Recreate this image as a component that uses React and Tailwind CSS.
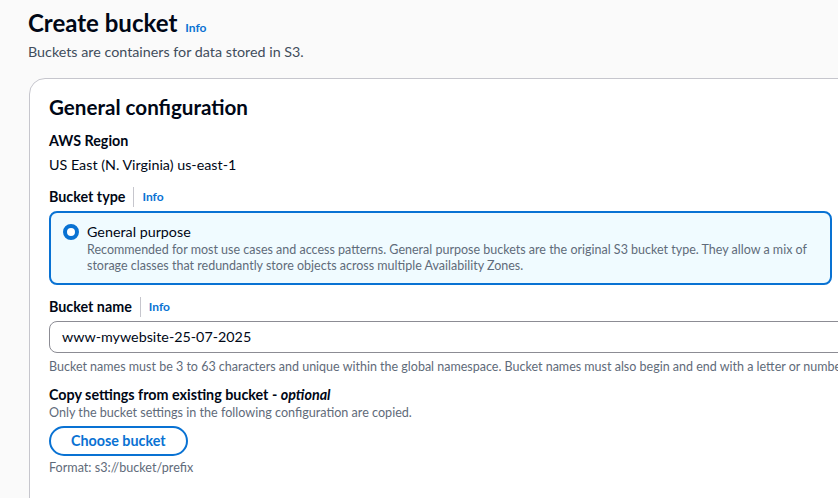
export default function App() {
  return (
    <div
      className="w-[838px] h-[498px] overflow-hidden bg-[#fafafa] text-[#000716]"
      style={{ fontFamily: 'Lato, "Noto Sans", sans-serif' }}
    >
      <div className="pl-[28px] pt-[7px]">
        <div className="flex items-baseline gap-[8px]">
          <h1 className="text-[24px] leading-[32px] font-bold">Create bucket</h1>
          <a className="text-[12px] font-bold text-[#0972d3]">Info</a>
        </div>
        <p className="mt-[3px] text-[14.3px] leading-[20px] text-[#414d5c]">
          Buckets are containers for data stored in S3.
        </p>
      </div>

      <div className="ml-[29px] mt-[16px] w-[880px] h-[440px] bg-white border border-[#c6c6cd] rounded-[16px] px-[19px] pt-[14px]">
        <h2 className="text-[20.6px] leading-[28px] font-bold">General configuration</h2>

        <div className="mt-[10px] text-[14.3px]">
          <div className="leading-[20px] font-bold">AWS Region</div>
          <div className="mt-[4px] leading-[20px]">US East (N. Virginia) us-east-1</div>
        </div>

        <div className="mt-[12px]">
          <Label text="Bucket type" />
          <div className="mt-[4px] w-[783px] h-[74px] rounded-[8px] border-2 border-[#0972d3] bg-[#f0fbff] flex gap-[8px] pl-[12px] pt-[9px]">
            <span className="mt-[2px] w-[16px] h-[16px] rounded-full border-[4px] border-[#0972d3] bg-white shrink-0" />
            <div>
              <div className="text-[14.3px] leading-[20px]">General purpose</div>
              <p className="text-[12.5px] leading-[16px] text-[#5f6b7a] pr-[12px]">
                Recommended for most use cases and access patterns. General purpose buckets are the original S3 bucket type. They allow a mix of storage classes that redundantly store objects across multiple Availability Zones.
              </p>
            </div>
          </div>
        </div>

        <div className="mt-[12px]">
          <Label text="Bucket name" />
          <div className="mt-[4px] w-[860px] h-[32px] rounded-[8px] border border-[#8c8c94] bg-white flex items-center px-[12px] text-[14.3px]">
            www-mywebsite-25-07-2025
          </div>
          <p className="mt-[6px] text-[12.5px] leading-[16px] text-[#5f6b7a] whitespace-nowrap">
            Bucket names must be 3 to 63 characters and unique within the global namespace. Bucket names must also begin and end with a letter or number.
          </p>
        </div>

        <div className="mt-[10px]">
          <div className="text-[14.3px] leading-[20px] font-bold">
            Copy settings from existing bucket - <i>optional</i>
          </div>
          <p className="text-[12.6px] leading-[16px] text-[#5f6b7a]">
            Only the bucket settings in the following configuration are copied.
          </p>
          <button className="mt-[5px] h-[30px] px-[20px] rounded-full border-2 border-[#0972d3] text-[#0972d3] text-[14.3px] font-bold bg-white">
            Choose bucket
          </button>
          <p className="mt-[4px] text-[12.6px] leading-[16px] text-[#5f6b7a]">Format: s3://bucket/prefix</p>
        </div>
      </div>
    </div>
  )
}

function Label({ text }) {
  return (
    <div className="flex items-center text-[14.3px] leading-[20px]">
      <span className="font-bold pr-[8px] border-r border-[#c6c6cd]">{text}</span>
      <a className="pl-[8px] text-[12px] font-bold text-[#0972d3]">Info</a>
    </div>
  )
}
